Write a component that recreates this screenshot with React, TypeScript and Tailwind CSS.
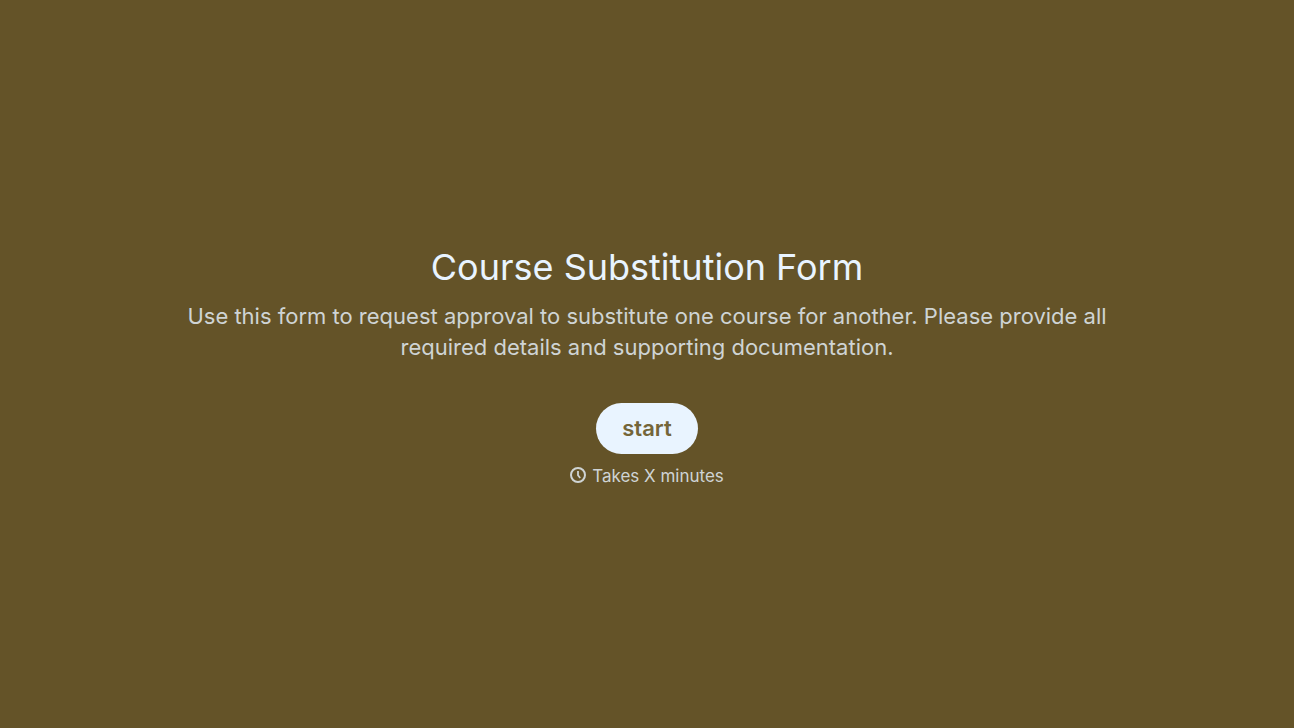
function ClockIcon() {
  return (
    <svg width="16" height="16" viewBox="0 0 16 16" fill="none" aria-hidden="true">
      <circle cx="8" cy="8" r="7" stroke="currentColor" strokeWidth="2" />
      <path d="M8 4v4.2l2.2 2.8" stroke="currentColor" strokeWidth="1.8" />
    </svg>
  )
}

function App() {
  return (
    <main className="flex min-h-screen flex-col items-center justify-center bg-[#645328] px-8 font-['Inter',sans-serif]">
      <section className="flex w-full max-w-[920px] flex-col items-center text-center">
        <h1 className="text-[36px] leading-[52px] text-[#e9f4ff]">Course Substitution Form</h1>
        <p className="mt-2 text-[22px] leading-[31px] text-[#cfd4d4]">
          Use this form to request approval to substitute one course for another. Please provide all required details and
          supporting documentation.
        </p>
        <button
          type="button"
          className="mt-10 rounded-full bg-[#e9f4ff] px-[26px] py-2.5 text-[22px] leading-[31px] font-semibold text-[#746539]"
        >
          start
        </button>
        <div className="mt-2.5 flex items-start gap-1.5 text-[#cfd4d4]">
          <span className="pt-[3px]">
            <ClockIcon />
          </span>
          <p className="text-[17px] leading-6">Takes X minutes</p>
        </div>
      </section>
    </main>
  )
}

export default App
